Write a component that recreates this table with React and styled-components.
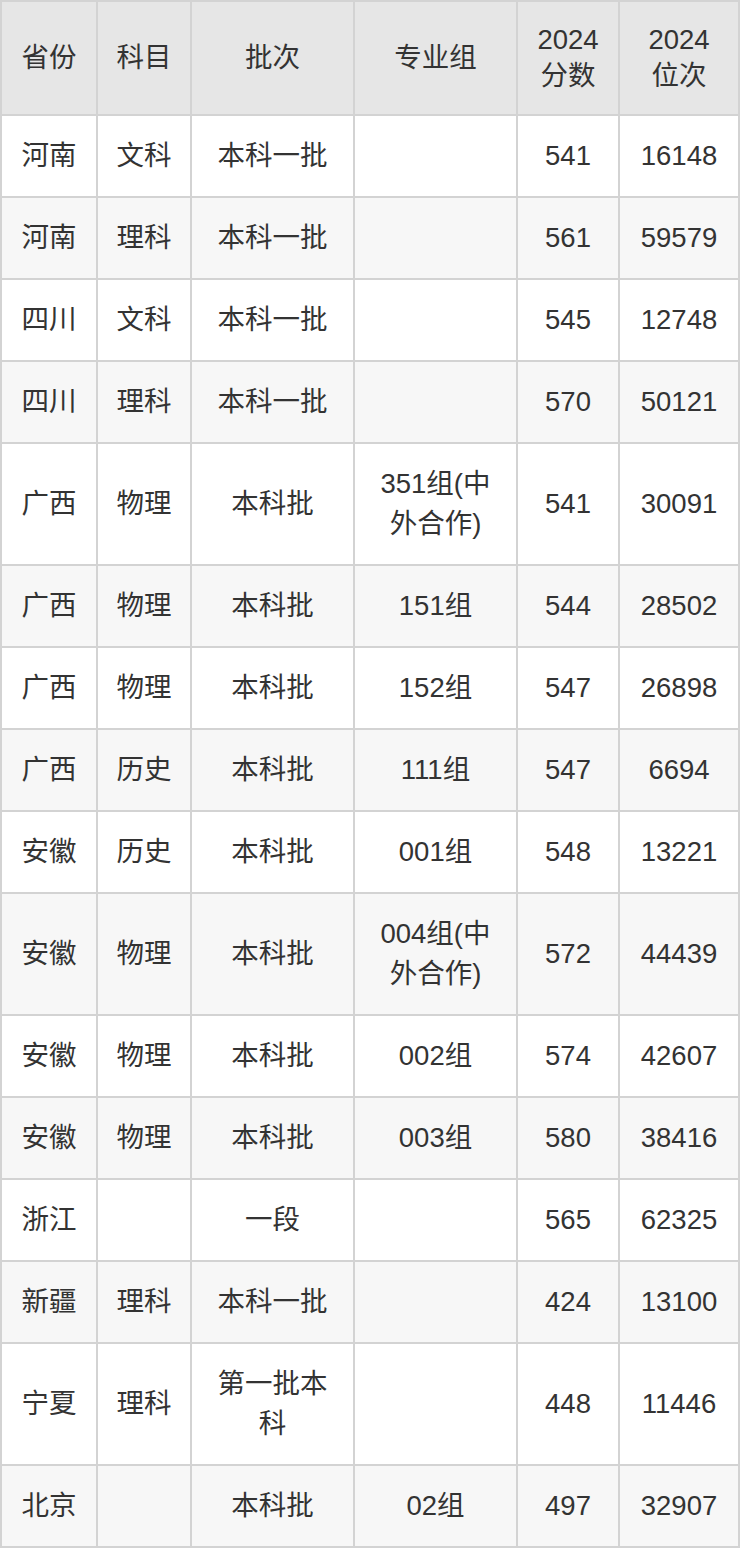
import styled, { createGlobalStyle } from 'styled-components';

const GlobalStyle = createGlobalStyle`
  html, body {
    margin: 0;
    padding: 0;
    background: #fff;
  }
  body {
    font-family: "Liberation Sans", "Noto Sans CJK SC", sans-serif;
    color: #333;
  }
`;

const Table = styled.div`
  width: 740px;
  box-sizing: border-box;
  display: grid;
  grid-template-columns: 94px 92px 161px 161px 100px 118px;
  gap: 2px;
  padding: 2px;
  background: #d3d3d3;
`;

const Cell = styled.div`
  display: flex;
  align-items: center;
  justify-content: center;
  text-align: center;
  box-sizing: border-box;
  padding: 20px 16px;
  min-height: ${({ $head }) => ($head ? '112px' : '80px')};
  font-size: 27.5px;
  line-height: ${({ $head }) => ($head ? '36px' : '40px')};
  color: #333;
  background: ${({ $head, $striped }) =>
    $head ? '#e6e6e6' : $striped ? '#f7f7f7' : '#ffffff'};
`;

const headers = ['省份', '科目', '批次', '专业组', '2024分数', '2024位次'];

const rows = [
  ['河南', '文科', '本科一批', '', '541', '16148'],
  ['河南', '理科', '本科一批', '', '561', '59579'],
  ['四川', '文科', '本科一批', '', '545', '12748'],
  ['四川', '理科', '本科一批', '', '570', '50121'],
  ['广西', '物理', '本科批', '351组(中外合作)', '541', '30091'],
  ['广西', '物理', '本科批', '151组', '544', '28502'],
  ['广西', '物理', '本科批', '152组', '547', '26898'],
  ['广西', '历史', '本科批', '111组', '547', '6694'],
  ['安徽', '历史', '本科批', '001组', '548', '13221'],
  ['安徽', '物理', '本科批', '004组(中外合作)', '572', '44439'],
  ['安徽', '物理', '本科批', '002组', '574', '42607'],
  ['安徽', '物理', '本科批', '003组', '580', '38416'],
  ['浙江', '', '一段', '', '565', '62325'],
  ['新疆', '理科', '本科一批', '', '424', '13100'],
  ['宁夏', '理科', '第一批本科', '', '448', '11446'],
  ['北京', '', '本科批', '02组', '497', '32907'],
];

export default function App() {
  return (
    <>
      <GlobalStyle />
      <Table>
        {headers.map((h) => (
          <Cell key={h} $head>
            {h}
          </Cell>
        ))}
        {rows.map((row, i) =>
          row.map((value, j) => (
            <Cell key={`${i}-${j}`} $striped={i % 2 === 1}>
              {value}
            </Cell>
          ))
        )}
      </Table>
    </>
  );
}
